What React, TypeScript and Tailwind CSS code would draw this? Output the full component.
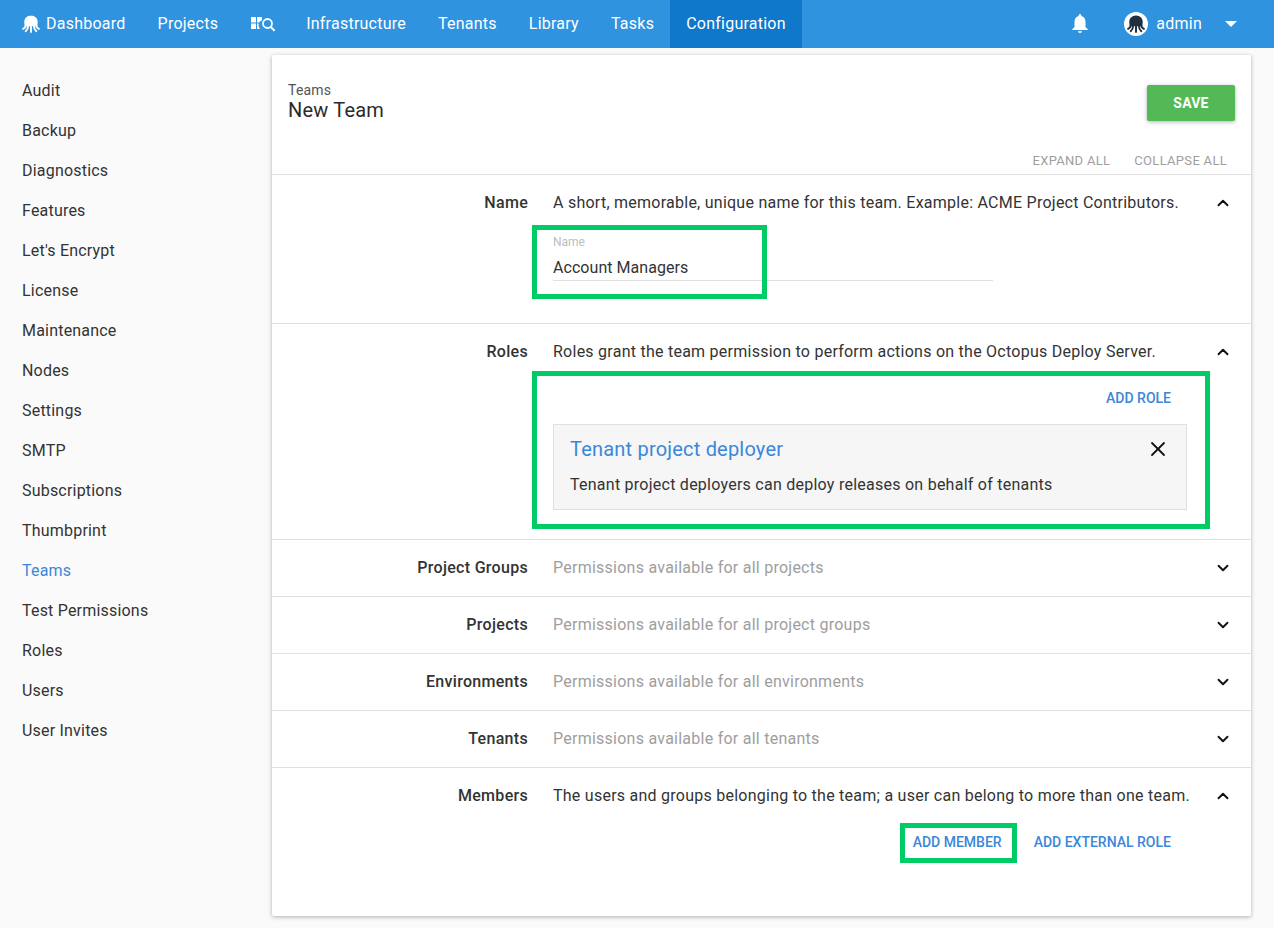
import { ChevronDown, ChevronUp, X } from "lucide-react";
import React from "react";

const sideLinks = ["Audit", "Backup", "Diagnostics", "Features", "Let's Encrypt", "License", "Maintenance", "Nodes", "Settings", "SMTP", "Subscriptions", "Thumbprint", "Teams", "Test Permissions", "Roles", "Users", "User Invites"];

const Octopus = ({ className }: { className?: string }) => (
    <svg viewBox="0 0 24 24" className={className} fill="currentColor">
        <path d="M12 0.500C6.500 0.500 3 4.500 3 9c0 3 .8 4.500.8 6h16.400c0-1.500.8-3 .8-6 0-4.500-3.500-8.500-9-8.500z" />
        <g fill="none" stroke="currentColor" strokeWidth="2.600" strokeLinecap="round">
            <path d="M5 13c0 3-1.500 4.500-3.500 5.500" />
            <path d="M8 15c0 3-1 5-3 6.500" />
            <path d="M12 15v7.500" />
            <path d="M16 15c0 3 1 5 3 6.500" />
            <path d="M19 13c0 3 1.500 4.500 3.500 5.500" />
        </g>
    </svg>
);

const NavItem = ({ label, active }: { label: string; active?: boolean }) => (
    <div className={`flex h-12 items-center px-4 ${active ? "bg-[#0f78cb]" : ""}`}>{label}</div>
);

const Section = ({ title, help, open, children, muted }: { title: string; help: string; open?: boolean; children?: React.ReactNode; muted?: boolean }) => (
    <div className="border-b border-[#e0e0e0] last:border-b-0">
        <div className="flex h-[56px] items-center">
            <div className="w-[256px] text-right font-medium tracking-[0.3px] text-[#333333]">{title}</div>
            <div className={`ml-[25px] flex-1 tracking-[0.25px] ${muted ? "text-[#9e9e9e]" : "text-[#333333]"}`}>{help}</div>
            <div className="mr-[21px] w-[16px] text-[#111111]">
                {open ? <ChevronUp size={18} strokeWidth={2.5} /> : <ChevronDown size={18} strokeWidth={2.5} />}
            </div>
        </div>
        {children}
    </div>
);

const App = () => {
    return (
        <div className="relative h-[928px] overflow-hidden bg-[#fafafa] font-['Roboto',sans-serif] text-base tracking-[0.2px] text-[#333333]">
            <div className="flex h-12 items-center bg-[#2f93e0] tracking-[0.24px] text-white">
                <div className="flex h-12 items-center pl-[22px] pr-4">
                    <Octopus className="mr-[6px] h-[18px] w-[18px]" />
                    Dashboard
                </div>
                <NavItem label="Projects" />
                <div className="flex h-12 items-center pl-[17px] pr-[15px]">
                    <svg width="24" height="16" viewBox="0 0 24 16" fill="none">
                        <path d="M0 1h5v5.500H0zM6 1h5v3.200c-1.300.5-2.300 1.300-2.900 2.300H6zM0 7.500h5V13H0zM6 7.500h1.600c-.2 1.800.2 3.800 1.400 5.500H6z" fill="white" />
                        <circle cx="16.500" cy="7.500" r="4.500" stroke="white" strokeWidth="1.800" />
                        <path d="M19.800 11l3.700 3.700" stroke="white" strokeWidth="2" />
                    </svg>
                </div>
                <NavItem label="Infrastructure" />
                <NavItem label="Tenants" />
                <NavItem label="Library" />
                <NavItem label="Tasks" />
                <NavItem label="Configuration" active />
                <div className="ml-auto flex items-center">
                    <svg width="16" height="20" viewBox="0 0 16 20" fill="white" className="mr-[36px]">
                        <path d="M8 0a1.300 1.300 0 0 1 1.300 1.300v.8C12 2.700 13.500 5 13.500 8v5l2.500 2.500V16H0v-.5L2.500 13V8C2.500 5 4 2.700 6.700 2.100v-.8A1.300 1.300 0 0 1 8 0zM5.800 17.200h4.400A2.200 2.200 0 0 1 8 19a2.200 2.200 0 0 1-2.200-1.800z" />
                    </svg>
                    <div className="mr-[8px] flex h-6 w-6 items-center justify-center rounded-full bg-white text-[#1f303f]">
                        <Octopus className="h-[18px] w-[18px]" />
                    </div>
                    <span className="mr-[23px]">admin</span>
                    <div className="mr-[37px] h-0 w-0 border-x-[6px] border-t-[6px] border-x-transparent border-t-white" />
                </div>
            </div>

            <div className="flex">
                <div className="w-[272px] pt-[22px]">
                    {sideLinks.map((link) => (
                        <div key={link} className={`flex h-10 items-center pl-[22px] pt-[2px] ${link === "Teams" ? "text-[#3b87d9]" : "text-[#333333]"}`}>
                            {link}
                        </div>
                    ))}
                </div>
                <div className="mt-[7px] h-[861px] w-[979px] rounded-[2px] bg-white shadow-[0_1px_4px_rgba(0,0,0,0.3)]">
                    <div className="relative h-[120px] border-b border-[#e0e0e0]">
                        <div className="pl-4 pt-[27px]">
                            <div className="text-sm leading-[16px] text-[#555555]">Teams</div>
                            <div className="text-[20px] leading-[24px] text-[#2b2b2b]">New Team</div>
                        </div>
                        <div className="absolute right-4 top-[30px] flex h-9 w-[88px] items-center justify-center rounded-[2px] bg-[#52b956] text-sm font-bold text-white shadow-[0_1px_4px_rgba(0,0,0,0.3)]">SAVE</div>
                        <div className="absolute right-[24px] top-[96px] flex gap-6 text-[13px] tracking-[0.3px] text-[#9e9e9e]">
                            <span>EXPAND ALL</span>
                            <span>COLLAPSE ALL</span>
                        </div>
                    </div>
                    <Section title="Name" help="A short, memorable, unique name for this team. Example: ACME Project Contributors." open>
                        <div className="ml-[281px] h-[92px] w-[440px]">
                            <div className="pt-[3px] text-xs tracking-normal text-[#bdbdbd]">Name</div>
                            <div className="mt-[6px] h-[25px] border-b border-[#e0e0e0] tracking-[0.05px] text-[#333333]">Account Managers</div>
                        </div>
                    </Section>
                    <Section title="Roles" help="Roles grant the team permission to perform actions on the Octopus Deploy Server." open>
                        <div className="h-[159px] pl-[281px] pr-[64px]">
                            <div className="flex h-[44px] justify-end pr-4 pt-[8px] text-sm font-medium tracking-normal text-[#3b87d9]">ADD ROLE</div>
                            <div className="h-[86px] border border-[#e0e0e0] bg-[#f6f6f6] px-4 pt-[9px]">
                                <div className="flex items-center justify-between">
                                    <div className="text-[20px] leading-[30px] text-[#3b87d9]">Tenant project deployer</div>
                                    <X size={24} strokeWidth={1.8} className="text-[#111111]" />
                                </div>
                                <div className="mt-[9px] tracking-[0.25px]">Tenant project deployers can deploy releases on behalf of tenants</div>
                            </div>
                        </div>
                    </Section>
                    <Section title="Project Groups" help="Permissions available for all projects" muted />
                    <Section title="Projects" help="Permissions available for all project groups" muted />
                    <Section title="Environments" help="Permissions available for all environments" muted />
                    <Section title="Tenants" help="Permissions available for all tenants" muted />
                    <Section title="Members" help="The users and groups belonging to the team; a user can belong to more than one team." open>
                        <div className="flex justify-end gap-[32px] pr-[80px] pt-[8px] text-sm font-medium tracking-normal text-[#3b87d9]">
                            <span>ADD MEMBER</span>
                            <span>ADD EXTERNAL ROLE</span>
                        </div>
                    </Section>
                </div>
            </div>

            <div className="absolute left-[532px] top-[225px] h-[74px] w-[235px] border-[5px] border-[#00cc66]" />
            <div className="absolute left-[532px] top-[371px] h-[158px] w-[678px] border-[5px] border-[#00cc66]" />
            <div className="absolute left-[900px] top-[823px] h-[40px] w-[117px] border-[5px] border-[#00cc66]" />
        </div>
    );
};

export default App;
